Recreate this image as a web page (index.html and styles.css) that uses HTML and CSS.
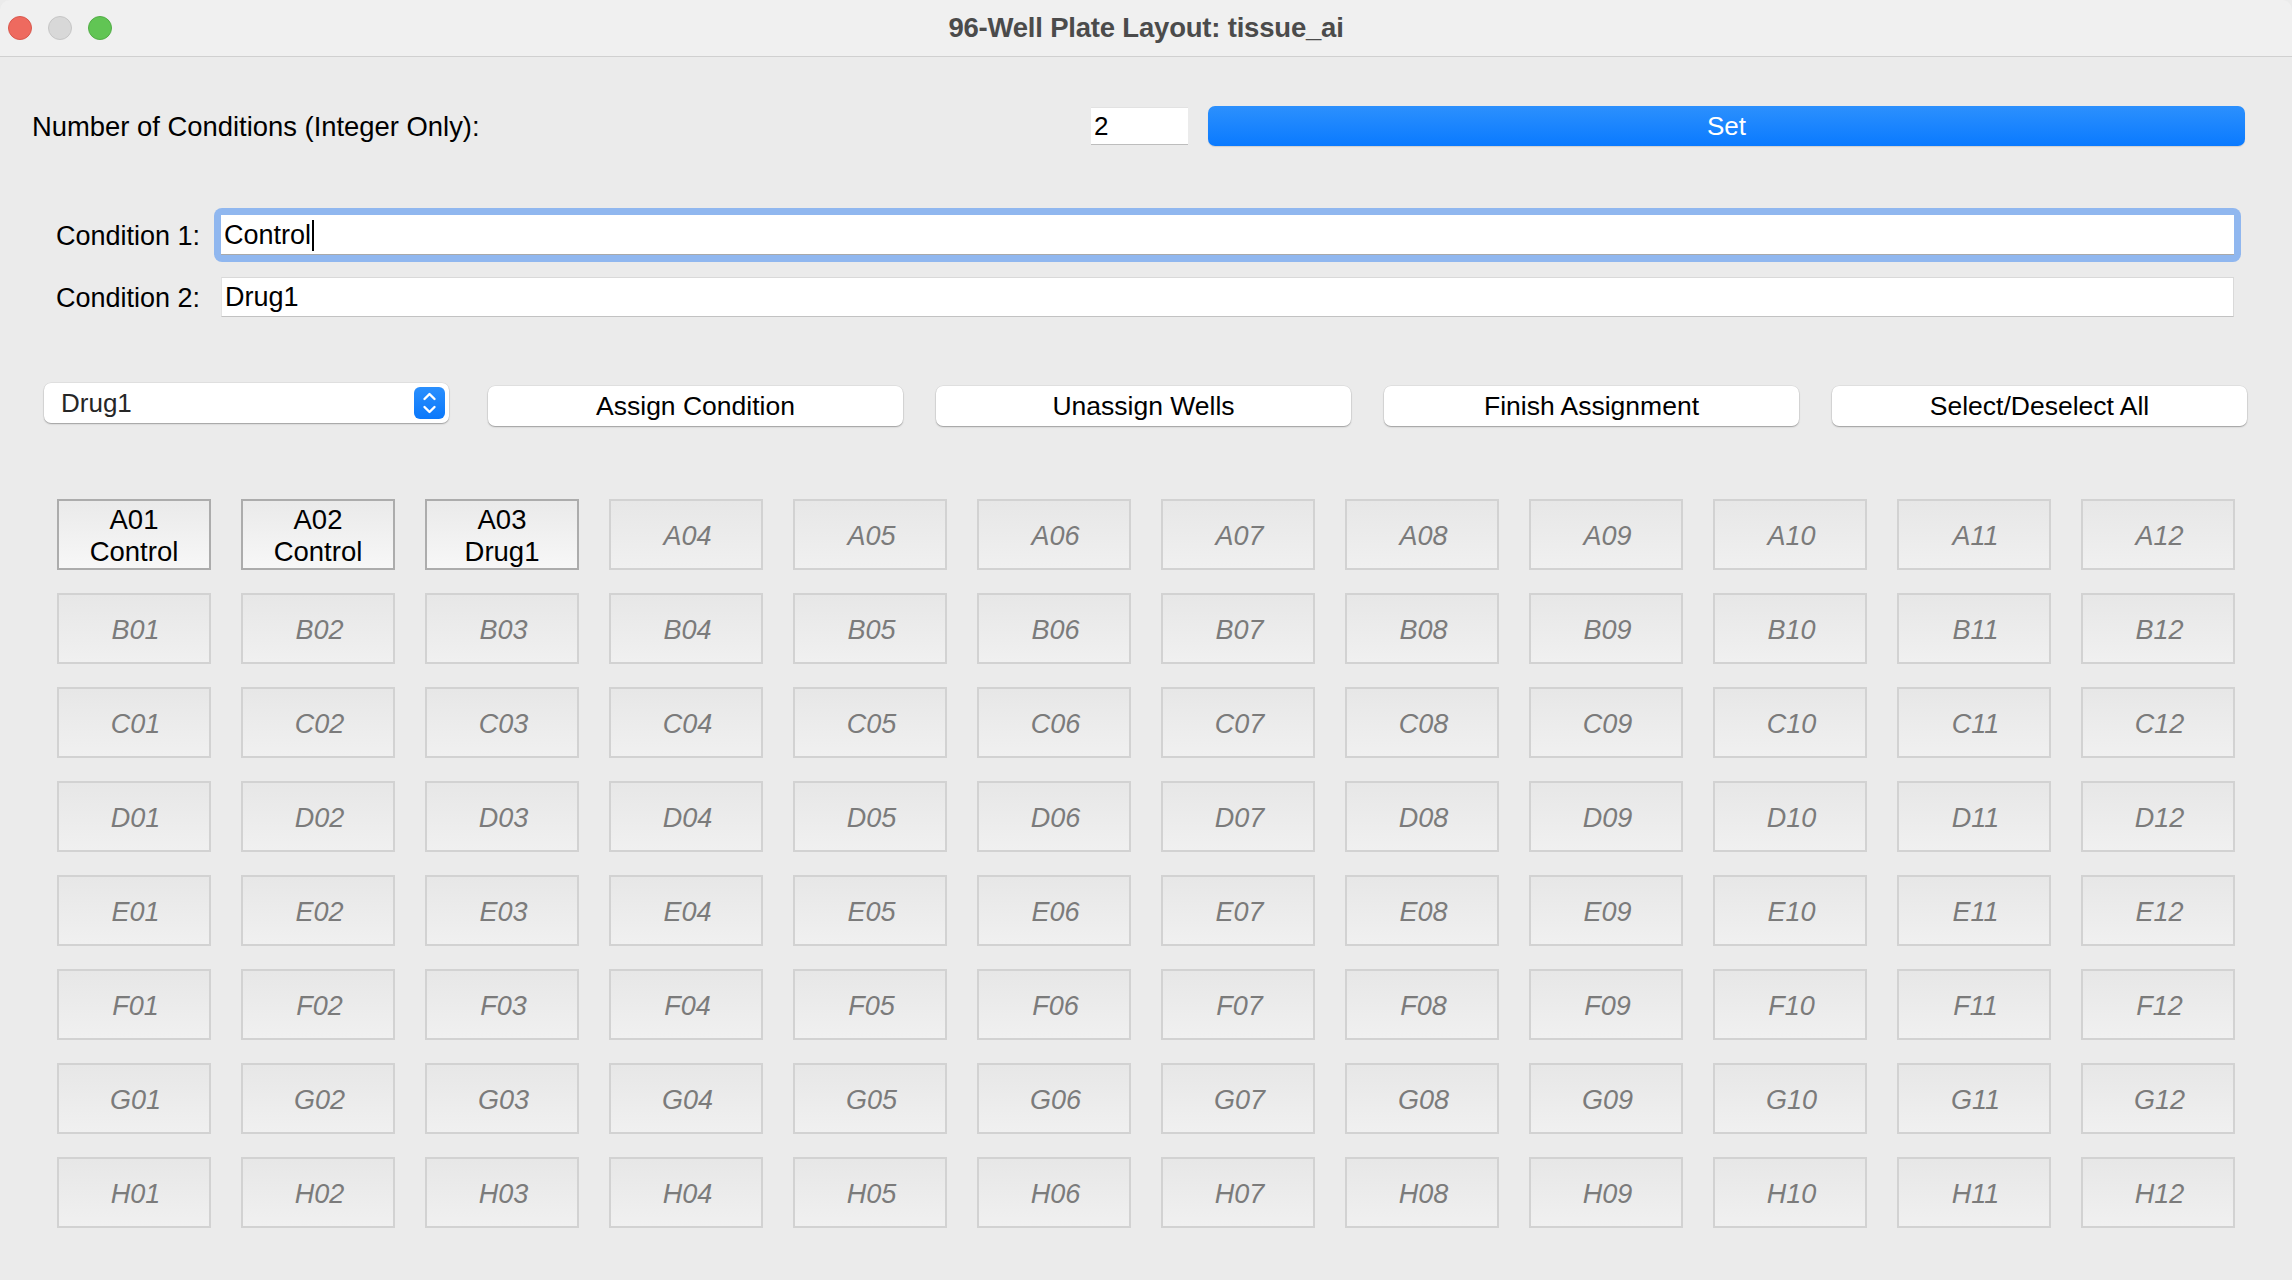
FILE: index.html
```html
<!DOCTYPE html>
<html lang="en">
<head>
<meta charset="utf-8">
<title>96-Well Plate Layout: tissue_ai</title>
<link rel="stylesheet" href="styles.css">
</head>
<body>
<div class="window">
  <header class="titlebar">
    <div class="lights">
      <span class="light red"></span>
      <span class="light gray"></span>
      <span class="light green"></span>
    </div>
    <div class="title">96-Well Plate Layout: tissue_ai</div>
    <div></div>
  </header>

  <main class="content">
    <div class="count-row">
      <div class="count-label">Number of Conditions (Integer Only):</div>
      <div class="count-input">2</div>
      <div class="set-btn">Set</div>
    </div>

    <div class="conditions">
      <div class="cond-row">
        <div class="cond-label">Condition 1:</div>
        <div class="ring">
          <div class="field focused">Control<span class="caret"></span></div>
        </div>
      </div>
      <div class="cond-row">
        <div class="cond-label">Condition 2:</div>
        <div class="field">Drug1</div>
      </div>
    </div>

    <div class="controls">
      <div class="dropdown">
        <span>Drug1</span>
        <svg class="stepper" width="31" height="32" viewBox="0 0 31 32">
          <defs>
            <linearGradient id="sg" x1="0" y1="0" x2="0" y2="1">
              <stop offset="0" stop-color="#2a8ffd"/>
              <stop offset="1" stop-color="#0a78fb"/>
            </linearGradient>
          </defs>
          <rect width="31" height="32" rx="6" fill="url(#sg)"/>
          <path d="M10.5 12 L15.5 7 L20.5 12" stroke="#fff" stroke-width="2.4" fill="none" stroke-linecap="round" stroke-linejoin="round"/>
          <path d="M10.5 20 L15.5 25 L20.5 20" stroke="#fff" stroke-width="2.4" fill="none" stroke-linecap="round" stroke-linejoin="round"/>
        </svg>
      </div>
      <div class="btn">Assign Condition</div>
      <div class="btn">Unassign Wells</div>
      <div class="btn">Finish Assignment</div>
      <div class="btn">Select/Deselect All</div>
    </div>

    <div class="plate">
      <div class="well assigned"><span>A01</span><span>Control</span></div>
      <div class="well assigned"><span>A02</span><span>Control</span></div>
      <div class="well assigned"><span>A03</span><span>Drug1</span></div>
      <div class="well">A04</div><div class="well">A05</div><div class="well">A06</div><div class="well">A07</div><div class="well">A08</div><div class="well">A09</div><div class="well">A10</div><div class="well">A11</div><div class="well">A12</div>
      <div class="well">B01</div><div class="well">B02</div><div class="well">B03</div><div class="well">B04</div><div class="well">B05</div><div class="well">B06</div><div class="well">B07</div><div class="well">B08</div><div class="well">B09</div><div class="well">B10</div><div class="well">B11</div><div class="well">B12</div>
      <div class="well">C01</div><div class="well">C02</div><div class="well">C03</div><div class="well">C04</div><div class="well">C05</div><div class="well">C06</div><div class="well">C07</div><div class="well">C08</div><div class="well">C09</div><div class="well">C10</div><div class="well">C11</div><div class="well">C12</div>
      <div class="well">D01</div><div class="well">D02</div><div class="well">D03</div><div class="well">D04</div><div class="well">D05</div><div class="well">D06</div><div class="well">D07</div><div class="well">D08</div><div class="well">D09</div><div class="well">D10</div><div class="well">D11</div><div class="well">D12</div>
      <div class="well">E01</div><div class="well">E02</div><div class="well">E03</div><div class="well">E04</div><div class="well">E05</div><div class="well">E06</div><div class="well">E07</div><div class="well">E08</div><div class="well">E09</div><div class="well">E10</div><div class="well">E11</div><div class="well">E12</div>
      <div class="well">F01</div><div class="well">F02</div><div class="well">F03</div><div class="well">F04</div><div class="well">F05</div><div class="well">F06</div><div class="well">F07</div><div class="well">F08</div><div class="well">F09</div><div class="well">F10</div><div class="well">F11</div><div class="well">F12</div>
      <div class="well">G01</div><div class="well">G02</div><div class="well">G03</div><div class="well">G04</div><div class="well">G05</div><div class="well">G06</div><div class="well">G07</div><div class="well">G08</div><div class="well">G09</div><div class="well">G10</div><div class="well">G11</div><div class="well">G12</div>
      <div class="well">H01</div><div class="well">H02</div><div class="well">H03</div><div class="well">H04</div><div class="well">H05</div><div class="well">H06</div><div class="well">H07</div><div class="well">H08</div><div class="well">H09</div><div class="well">H10</div><div class="well">H11</div><div class="well">H12</div>
    </div>
  </main>
</div>
</body>
</html>
```

FILE: styles.css
```css
* { box-sizing: border-box; }

body {
  margin: 0;
  background: #ebebeb;
  font-family: "Liberation Sans", Arial, sans-serif;
  color: #000;
}

.window {
  width: 2292px;
  height: 1280px;
  background: #ebebeb;
  overflow: hidden;
}

/* Title bar */
.titlebar {
  height: 57px;
  background: #f0f0f0;
  border-bottom: 1px solid #d0d0d0;
  display: grid;
  grid-template-columns: 1fr auto 1fr;
  align-items: center;
  border-top-left-radius: 10px;
  border-top-right-radius: 10px;
}

.lights {
  display: flex;
  gap: 16px;
  padding-left: 8px;
}

.light {
  width: 24px;
  height: 24px;
  border-radius: 50%;
  display: block;
}
.light.red { background: #ee6a5f; border: 1px solid #d9584d; }
.light.gray { background: #d8d8d8; border: 1px solid #c6c6c6; }
.light.green { background: #61c554; border: 1px solid #52ad46; }

.title {
  font-size: 27.5px;
  font-weight: bold;
  color: #4b4b4b;
  letter-spacing: -0.2px;
}

/* Count row */
.count-row {
  display: flex;
  align-items: center;
  height: 40px;
  margin-top: 49px;
  padding: 0 47px 0 32px;
}

.count-label {
  flex: 1;
  font-size: 27.4px;
  padding-top: 1px;
}

.count-input {
  width: 97px;
  height: 38px;
  background: #fff;
  border-bottom: 1px solid #bdbdbd;
  border-top: 1px solid #e2e2e2;
  font-size: 26px;
  padding-left: 3px;
  display: flex;
  align-items: center;
  margin-right: 20px;
}

.set-btn {
  width: 1037px;
  height: 40px;
  border-radius: 7px;
  background: linear-gradient(#2c90fd, #0a7aff);
  color: #fff;
  font-size: 26px;
  display: flex;
  align-items: center;
  justify-content: center;
  box-shadow: 0 1px 1px rgba(0, 0, 0, 0.12);
}

/* Conditions */
.conditions {
  display: flex;
  flex-direction: column;
  gap: 22px;
  margin-top: 69px;
  padding: 0 58px 0 56px;
}

.cond-row {
  display: flex;
  align-items: center;
  height: 40px;
}

.cond-label {
  width: 165px;
  font-size: 27px;
  padding-top: 2px;
}

.field {
  flex: 1;
  height: 40px;
  background: #fff;
  font-size: 27px;
  padding-left: 3px;
  padding-top: 1px;
  display: flex;
  align-items: center;
  border-top: 1px solid #d9d9d9;
  border-left: 1px solid #e2e2e2;
  border-right: 1px solid #d9d9d9;
  border-bottom: 1px solid #c2c2c2;
}

.ring {
  flex: 1;
  display: flex;
  padding: 7px;
  margin: -7px;
  border-radius: 8px;
  background: #90b7ef;
}

.field.focused {
  border: none;
  border-bottom: 1px solid #a9a9a9;
}

.caret {
  display: inline-block;
  width: 2px;
  height: 31px;
  background: #000;
  margin-left: 1px;
}

/* Controls */
.controls {
  display: flex;
  align-items: flex-start;
  margin-top: 66px;
  padding-left: 44px;
}

.dropdown {
  width: 405px;
  height: 40px;
  margin-right: 39px;
  border-radius: 7px;
  background: #fff;
  box-shadow: 0 1px 1.5px rgba(0, 0, 0, 0.3), 0 0 0 0.5px rgba(0, 0, 0, 0.08);
  display: flex;
  align-items: center;
  justify-content: space-between;
  padding: 0 4px 0 17px;
  font-size: 26px;
  color: #262626;
}

.stepper { display: block; }

.btn {
  width: 415px;
  height: 40px;
  margin-top: 3px;
  margin-right: 33px;
  border-radius: 7px;
  background: #fff;
  box-shadow: 0 1px 1.5px rgba(0, 0, 0, 0.3), 0 0 0 0.5px rgba(0, 0, 0, 0.08);
  display: flex;
  align-items: center;
  justify-content: center;
  font-size: 26.5px;
}

/* Plate */
.plate {
  display: grid;
  grid-template-columns: repeat(12, 154px);
  grid-auto-rows: 71px;
  column-gap: 30px;
  row-gap: 23px;
  margin-top: 73px;
  padding-left: 57px;
}

.well {
  border: 2px solid #d2d2d2;
  background: linear-gradient(#e7e7e7, #f0f0f0);
  display: flex;
  align-items: center;
  justify-content: center;
  font-size: 27px;
  font-style: italic;
  color: #7b7b7b;
  padding-top: 3px;
  padding-left: 3px;
}

.well.assigned {
  border-color: #acacac;
  background: linear-gradient(#eaeaea, #f7f7f7);
  color: #000;
  font-style: normal;
  flex-direction: column;
  font-size: 27.5px;
  line-height: 32px;
  padding: 2px 0 0 0;
}
```
